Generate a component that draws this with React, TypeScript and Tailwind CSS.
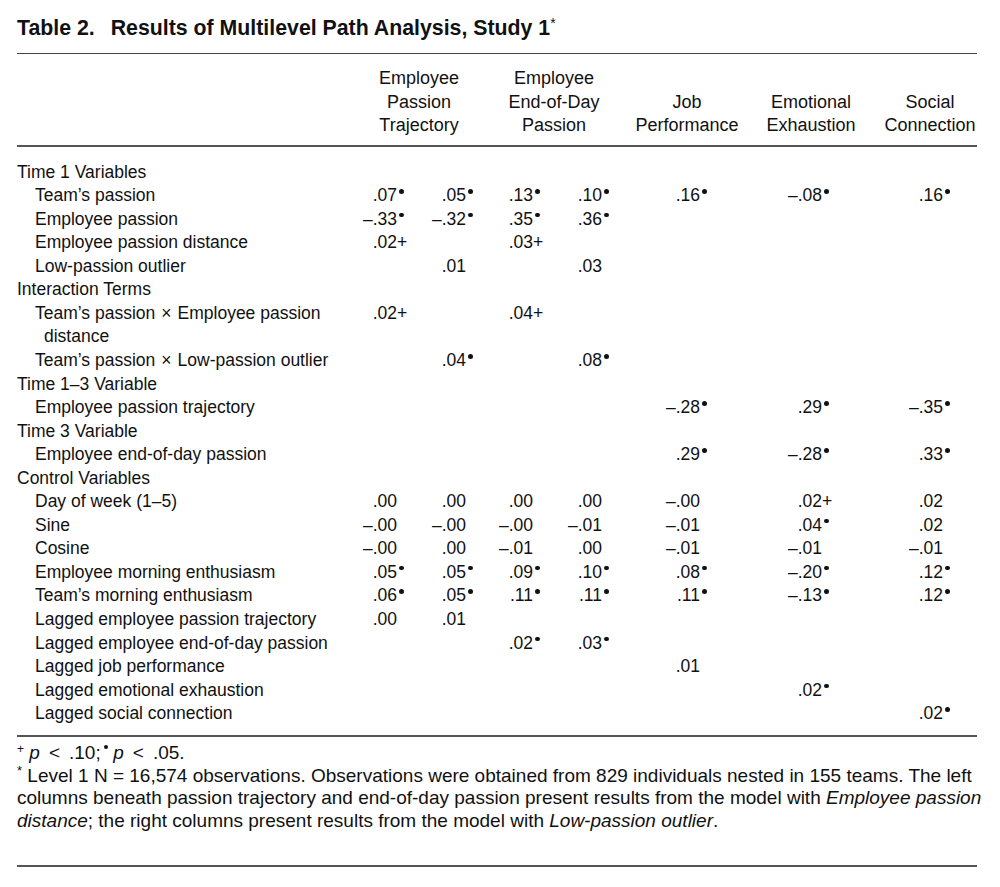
import React from "react";

type Row =
  | { kind: "group"; label: string }
  | { kind: "item"; label: React.ReactNode; values: string[]; wrap?: boolean };

const GRID = "grid grid-cols-[333px_69px_69px_66px_66px_134px_114px_109px]";

// right padding per value column so the digits line up like the printed table
const PAD = ["pr-[10px]", "pr-[10px]", "pr-[9px]", "pr-[6px]", "pr-[42px]", "pr-[34px]", "pr-[22px]"];

const X = <span className="mx-[6px]">×</span>;

const rows: Row[] = [
  { kind: "group", label: "Time 1 Variables" },
  { kind: "item", label: "Team’s passion", values: [".07*", ".05*", ".13*", ".10*", ".16*", "–.08*", ".16*"] },
  { kind: "item", label: "Employee passion", values: ["–.33*", "–.32*", ".35*", ".36*", "", "", ""] },
  { kind: "item", label: "Employee passion distance", values: [".02+", "", ".03+", "", "", "", ""] },
  { kind: "item", label: "Low-passion outlier", values: ["", ".01", "", ".03", "", "", ""] },
  { kind: "group", label: "Interaction Terms" },
  {
    kind: "item",
    wrap: true,
    label: (
      <>
        Team’s passion{X}Employee passion
        <br />
        distance
      </>
    ),
    values: [".02+", "", ".04+", "", "", "", ""],
  },
  { kind: "item", label: <>Team’s passion{X}Low-passion outlier</>, values: ["", ".04*", "", ".08*", "", "", ""] },
  { kind: "group", label: "Time 1–3 Variable" },
  { kind: "item", label: "Employee passion trajectory", values: ["", "", "", "", "–.28*", ".29*", "–.35*"] },
  { kind: "group", label: "Time 3 Variable" },
  { kind: "item", label: "Employee end-of-day passion", values: ["", "", "", "", ".29*", "–.28*", ".33*"] },
  { kind: "group", label: "Control Variables" },
  { kind: "item", label: "Day of week (1–5)", values: [".00", ".00", ".00", ".00", "–.00", ".02+", ".02"] },
  { kind: "item", label: "Sine", values: ["–.00", "–.00", "–.00", "–.01", "–.01", ".04*", ".02"] },
  { kind: "item", label: "Cosine", values: ["–.00", ".00", "–.01", ".00", "–.01", "–.01", "–.01"] },
  { kind: "item", label: "Employee morning enthusiasm", values: [".05*", ".05*", ".09*", ".10*", ".08*", "–.20*", ".12*"] },
  { kind: "item", label: "Team’s morning enthusiasm", values: [".06*", ".05*", ".11*", ".11*", ".11*", "–.13*", ".12*"] },
  { kind: "item", label: "Lagged employee passion trajectory", values: [".00", ".01", "", "", "", "", ""] },
  { kind: "item", label: "Lagged employee end-of-day passion", values: ["", "", ".02*", ".03*", "", "", ""] },
  { kind: "item", label: "Lagged job performance", values: ["", "", "", "", ".01", "", ""] },
  { kind: "item", label: "Lagged emotional exhaustion", values: ["", "", "", "", "", ".02*", ""] },
  { kind: "item", label: "Lagged social connection", values: ["", "", "", "", "", "", ".02*"] },
];

function Dot({ top = "mt-[5px]" }: { top?: string }) {
  return <span className={`inline-block size-[4.5px] rounded-full bg-[#111] align-top ${top}`} />;
}

function Value({ raw, pad }: { raw: string; pad: string }) {
  if (!raw) return <div />;
  const mark = raw.endsWith("*") ? "dot" : raw.endsWith("+") ? "plus" : null;
  const num = mark ? raw.slice(0, -1) : raw;
  return (
    <div className={`flex justify-end ${pad}`}>
      <span>{num}</span>
      <span className={`w-[12px] text-left ${mark === "dot" ? "pl-[2px]" : ""}`}>
        {mark === "dot" ? <Dot /> : mark === "plus" ? "+" : ""}
      </span>
    </div>
  );
}

export default function App() {
  return (
    <div className="min-h-[887px] bg-white text-[#111] font-['Liberation_Sans',Arial,sans-serif]">
      <div className="ml-[17px] w-[960px] pt-[15px]">
        <h1 className="text-[21.3px] font-bold leading-[26px] whitespace-nowrap">
          Table 2.<span className="ml-[16px]">Results of Multilevel Path Analysis, Study 1</span>
          <sup className="text-[14px] font-normal">*</sup>
        </h1>

        <div className="mt-[12px] border-t border-[#444]" />

        {/* column heads */}
        <div className={`${GRID} pt-[13px] pb-[7px] text-[18px] leading-[23.55px] border-b-2 border-[#555]`}>
          <div />
          <div className="col-span-2 text-center">
            Employee
            <br />
            Passion
            <br />
            Trajectory
          </div>
          <div className="col-span-2 text-center">
            Employee
            <br />
            End-of-Day
            <br />
            Passion
          </div>
          <div className="self-end text-center">
            Job
            <br />
            Performance
          </div>
          <div className="self-end text-center">
            Emotional
            <br />
            Exhaustion
          </div>
          <div className="self-end pl-[15px] text-center whitespace-nowrap">
            Social
            <br />
            Connection
          </div>
        </div>

        {/* body */}
        <div className="pt-[14px] pb-[9px] text-[17.5px] leading-[23.55px] border-b-2 border-[#555]">
          {rows.map((row, i) =>
            row.kind === "group" ? (
              <div key={i}>{row.label}</div>
            ) : (
              <div key={i} className={GRID}>
                <div className={`whitespace-nowrap ${row.wrap ? "pl-[27px] -indent-[9px]" : "pl-[18px]"}`}>
                  {row.label}
                </div>
                {row.values.map((v, j) => (
                  <Value key={j} raw={v} pad={PAD[j]} />
                ))}
              </div>
            )
          )}
        </div>

        {/* notes */}
        <div className="pt-[5px] pb-[32px] text-[19px] leading-[22.8px] whitespace-nowrap border-b-2 border-[#555]">
          <p>
            <sup className="text-[12px]">+</sup> <i>p</i>
            <span className="mx-[9px]">&lt;</span>.10;
            <span className="ml-[3px] mr-[5px]">
              <Dot top="mt-[3px]" />
            </span>
            <i>p</i>
            <span className="mx-[9px]">&lt;</span>.05.
          </p>
          <p>
            <sup className="text-[13px]">*</sup> Level 1 N = 16,574 observations. Observations were obtained from 829
            individuals nested in 155 teams. The left
            <br />
            columns beneath passion trajectory and end-of-day passion present results from the model with{" "}
            <i>Employee passion</i>
            <br />
            <i>distance</i>; the right columns present results from the model with <i>Low-passion outlier</i>.
          </p>
        </div>
      </div>
    </div>
  );
}
